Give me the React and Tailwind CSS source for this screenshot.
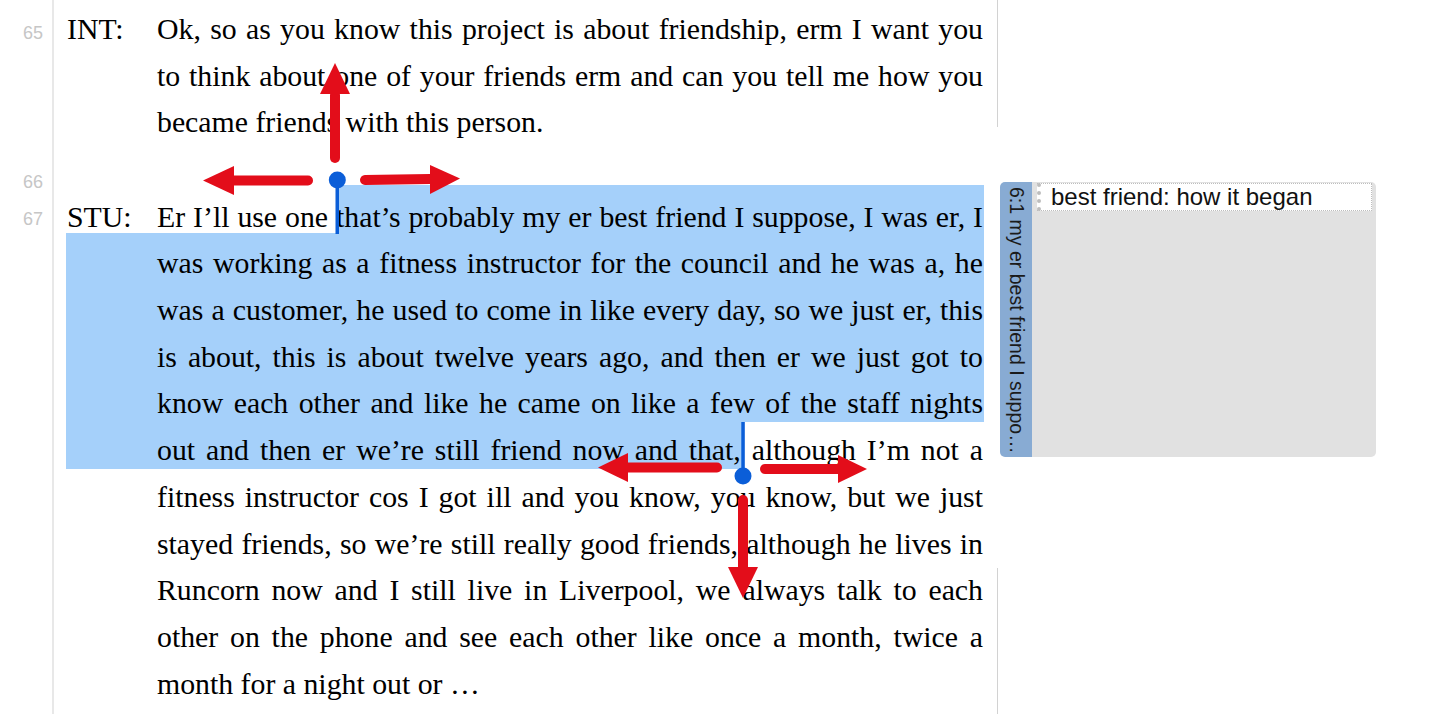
import React from "react";

const INT_LINES = [
  "Ok, so as you know this project is about friendship, erm I want you",
  "to think about one of your friends erm and can you tell me how you",
  "became friends with this person.",
];

const STU_LINES = [
  "Er I’ll use one that’s probably my er best friend I suppose, I was er, I",
  "was working as a fitness instructor for the council and he was a, he",
  "was a customer, he used to come in like every day, so we just er, this",
  "is about, this is about twelve years ago, and then er we just got to",
  "know each other and like he came on like a few of the staff nights",
  "out and then er we’re still friend now and that, although I’m not a",
  "fitness instructor cos I got ill and you know, you know, but we just",
  "stayed friends, so we’re still really good friends, although he lives in",
  "Runcorn now and I still live in Liverpool, we always talk to each",
  "other on the phone and see each other like once a month, twice a",
  "month for a night out or …",
];

function Gutter({ num, pad }) {
  return (
    <div className="w-[54px] shrink-0 border-r-2 border-[#e8e8e8] pr-[9px] text-right">
      {num && (
        <div className={`${pad} font-['Liberation_Sans',Arial,sans-serif] text-[18px] leading-[20px] text-[#c6c6c6]`}>
          {num}
        </div>
      )}
    </div>
  );
}

function Speech({ num, pad, speaker, lines }) {
  return (
    <div className="relative flex">
      <Gutter num={num} pad={pad} />
      <div className="flex pl-[13px] font-['Liberation_Serif','Times_New_Roman',serif] text-[29.8px] leading-[46.7px] text-black">
        <div className="w-[90px] shrink-0">{speaker}</div>
        <div className="w-[826px]">
          {lines.map((line, i) => (
            <div
              key={i}
              className={
                i < lines.length - 1
                  ? "whitespace-nowrap text-justify [text-align-last:justify]"
                  : "whitespace-nowrap"
              }
            >
              {line}
            </div>
          ))}
        </div>
      </div>
    </div>
  );
}

function Handles() {
  const red = "#e30d1a";
  const blue = "#0b5ed8";
  return (
    <svg className="pointer-events-none absolute left-0 top-0" width="983" height="714">
      {/* selection handles */}
      <rect x="335.5" y="180" width="3.5" height="54" fill={blue} />
      <circle cx="337.3" cy="180" r="8.5" fill={blue} />
      <rect x="741.3" y="422" width="3.5" height="54" fill={blue} />
      <circle cx="743" cy="476" r="8.5" fill={blue} />

      {/* arrows around the handles */}
      <g stroke={red} strokeWidth="10" strokeLinecap="round" fill="none">
        <line x1="335" y1="158" x2="335" y2="95" />
        <line x1="308" y1="180.5" x2="234" y2="180.5" />
        <line x1="365" y1="180" x2="430" y2="179" />
        <line x1="717" y1="467.5" x2="628" y2="467.5" />
        <line x1="765" y1="469" x2="838" y2="469" />
        <line x1="743" y1="500" x2="743" y2="568" />
      </g>
      <g fill={red}>
        <polygon points="320,94 350,94 335,63" />
        <polygon points="234,166 234,195 203,180.5" />
        <polygon points="430,165 430,194 460,178.5" />
        <polygon points="628,453 628,482 598,467.5" />
        <polygon points="838,455 838,483 867,469" />
        <polygon points="728,567 758,567 743,598" />
      </g>
    </svg>
  );
}

function CodePanel() {
  return (
    <div className="ml-[3px] flex h-[275px] w-[376px]">
      <div className="flex w-[32px] shrink-0 justify-center rounded-l-[5px] bg-[#88abd3] pt-[5px]">
        <span className="font-['Liberation_Sans',Arial,sans-serif] text-[19.5px] leading-none text-[#1b1b1b] [writing-mode:vertical-rl]">
          6:1 my er best friend I suppo…
        </span>
      </div>
      <div className="flex-1 rounded-r-[5px] bg-[#e1e1e1] pl-[5px] pr-[4px] pt-[1px]">
        <div className="h-[28px] border border-l-4 border-dotted border-[#bdbdbd] bg-white pl-[10px] font-['Liberation_Sans',Arial,sans-serif] text-[24px] leading-[26px] text-[#111]">
          best friend: how it began
        </div>
      </div>
    </div>
  );
}

export default function App() {
  return (
    <div className="flex min-h-screen overflow-hidden bg-white">
      <div className="relative flex w-[983px] shrink-0 flex-col">
        {/* selection highlight */}
        <div className="absolute left-[337px] top-[185px] h-[48px] w-[647px] bg-[#a5d0fa]" />
        <div className="absolute left-[66px] top-[233px] h-[189px] w-[918px] bg-[#a5d0fa]" />
        <div className="absolute left-[66px] top-[422px] h-[47px] w-[677px] bg-[#a5d0fa]" />

        <div className="relative flex h-[6px]">
          <Gutter />
        </div>
        <Speech num="65" pad="pt-[17px]" speaker="INT:" lines={INT_LINES} />
        <div className="relative flex h-[47.5px]">
          <Gutter num="66" pad="pt-[26px]" />
        </div>
        <Speech num="67" pad="pt-[15px]" speaker="STU:" lines={STU_LINES} />
        <div className="relative flex flex-1">
          <Gutter />
        </div>

        <Handles />
      </div>

      <div className="ml-[14px] flex w-[380px] flex-col">
        <div className="h-[127px] border-l border-[#d2d2d2]" />
        <div className="h-[55px]" />
        <CodePanel />
        <div className="h-[111px]" />
        <div className="flex-1 border-l border-[#d2d2d2]" />
      </div>
    </div>
  );
}
